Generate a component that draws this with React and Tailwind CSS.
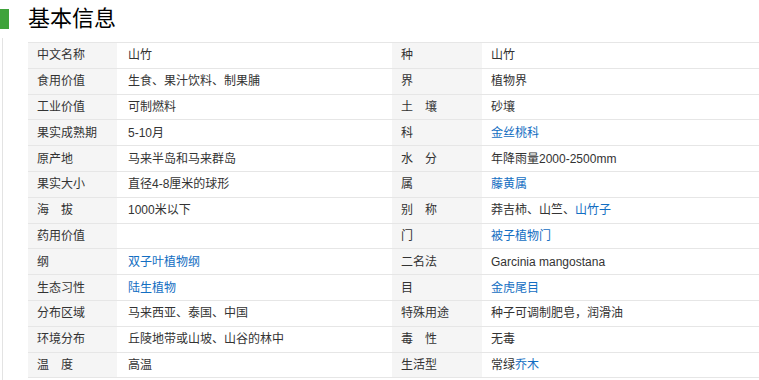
import React from 'react';

const rows = [
  { l1: '中文名称', v1: '山竹', l2: '种', v2: '山竹' },
  { l1: '食用价值', v1: '生食、果汁饮料、制果脯', l2: '界', v2: '植物界' },
  { l1: '工业价值', v1: '可制燃料', l2: '土　壤', v2: '砂壤' },
  { l1: '果实成熟期', v1: '5-10月', l2: '科', v2: [{ t: '金丝桃科', link: true }] },
  { l1: '原产地', v1: '马来半岛和马来群岛', l2: '水　分', v2: '年降雨量2000-2500mm' },
  { l1: '果实大小', v1: '直径4-8厘米的球形', l2: '属', v2: [{ t: '藤黄属', link: true }] },
  { l1: '海　拔', v1: '1000米以下', l2: '别　称', v2: [{ t: '莽吉柿、山竺、' }, { t: '山竹子', link: true }] },
  { l1: '药用价值', v1: '', l2: '门', v2: [{ t: '被子植物门', link: true }] },
  { l1: '纲', v1: [{ t: '双子叶植物纲', link: true }], l2: '二名法', v2: 'Garcinia mangostana' },
  { l1: '生态习性', v1: [{ t: '陆生植物', link: true }], l2: '目', v2: [{ t: '金虎尾目', link: true }] },
  { l1: '分布区域', v1: '马来西亚、泰国、中国', l2: '特殊用途', v2: '种子可调制肥皂，润滑油' },
  { l1: '环境分布', v1: '丘陵地带或山坡、山谷的林中', l2: '毒　性', v2: '无毒' },
  { l1: '温　度', v1: '高温', l2: '生活型', v2: [{ t: '常绿' }, { t: '乔木', link: true }] },
];

function Value({ v }) {
  if (typeof v === 'string') return v;
  return v.map((p, i) =>
    p.link ? (
      <a key={i} className="text-[#136ec2]" href="#">
        {p.t}
      </a>
    ) : (
      <span key={i}>{p.t}</span>
    )
  );
}

export default function App() {
  return (
    <div
      className="w-[759px] h-[380px] overflow-hidden bg-white text-[#333]"
      style={{ fontFamily: '"Microsoft YaHei", Arial, "Noto Sans CJK SC", sans-serif' }}
    >
      {/* title */}
      <div className="flex items-center h-[38px]">
        <div className="w-[9px] h-[20px] bg-[#3fa33b]" />
        <h2 className="ml-[19px] text-[22px] leading-none font-normal text-[#000]">基本信息</h2>
      </div>

      <div className="ml-[2px] border-l border-[#e3e3e3] pt-[4px] pl-[25px] h-[342px]">
        <div className="border-t border-[#e6e6e6] text-[12px] w-[760px]">
          {rows.map((r, i) => (
            <div key={i} className="flex h-[25.8px] items-center border-b border-[#e6e6e6]">
              <div className="w-[89px] h-full flex items-center pl-[9px] bg-[#f5f5f5]">{r.l1}</div>
              <div className="w-[275px] h-full flex items-center pl-[11px]">
                <Value v={r.v1} />
              </div>
              <div className="w-[90px] h-full flex items-center pl-[9px] bg-[#f5f5f5]">{r.l2}</div>
              <div className="flex-1 h-full flex items-center pl-[9px]">
                <Value v={r.v2} />
              </div>
            </div>
          ))}
        </div>
      </div>
    </div>
  );
}
